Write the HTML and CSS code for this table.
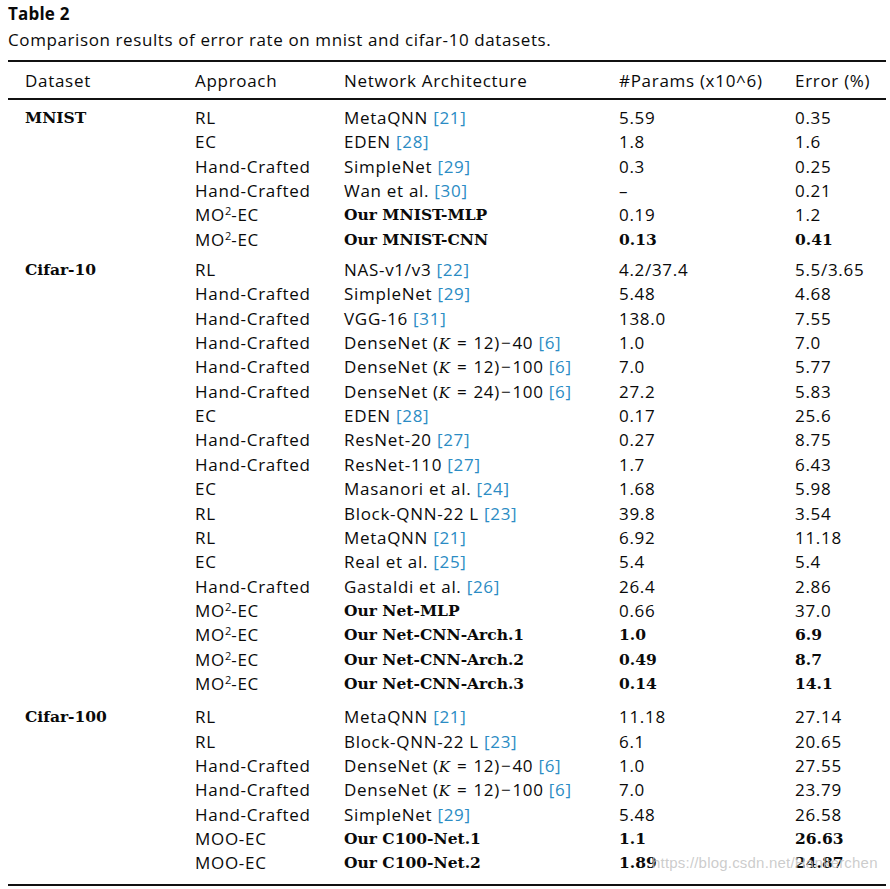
FILE: index.html
```html
<!DOCTYPE html>
<html>
<head>
<meta charset="utf-8">
<link rel="stylesheet" href="styles.css">
</head>
<body>
<div class="page">
  <div class="title">Table 2</div>
  <div class="caption">Comparison results of error rate on mnist and cifar-10 datasets.</div>
  <table class="tbl">
    <colgroup>
      <col class="c1"><col class="c2"><col class="c3"><col class="c4"><col class="c5">
    </colgroup>
    <thead>
      <tr><th class="first">Dataset</th><th>Approach</th><th>Network Architecture</th><th>#Params (x10^6)</th><th>Error (%)</th></tr>
    </thead>
    <tbody class="grp g1">
      <tr class="gtop"><td class="first b">MNIST</td><td>RL</td><td>MetaQNN <span class="ref">[21]</span></td><td>5.59</td><td>0.35</td></tr>
      <tr><td class="first"></td><td>EC</td><td>EDEN <span class="ref">[28]</span></td><td>1.8</td><td>1.6</td></tr>
      <tr><td class="first"></td><td>Hand-Crafted</td><td>SimpleNet <span class="ref">[29]</span></td><td>0.3</td><td>0.25</td></tr>
      <tr><td class="first"></td><td>Hand-Crafted</td><td>Wan et al. <span class="ref">[30]</span></td><td>–</td><td>0.21</td></tr>
      <tr><td class="first"></td><td>MO<sup>2</sup>-EC</td><td class="b">Our MNIST-MLP</td><td>0.19</td><td>1.2</td></tr>
      <tr class="gbot"><td class="first"></td><td>MO<sup>2</sup>-EC</td><td class="b">Our MNIST-CNN</td><td class="b">0.13</td><td class="b">0.41</td></tr>
    </tbody>
    <tbody class="grp g2">
      <tr class="gtop"><td class="first b">Cifar-10</td><td>RL</td><td>NAS-v1/v3 <span class="ref">[22]</span></td><td>4.2/37.4</td><td>5.5/3.65</td></tr>
      <tr><td class="first"></td><td>Hand-Crafted</td><td>SimpleNet <span class="ref">[29]</span></td><td>5.48</td><td>4.68</td></tr>
      <tr><td class="first"></td><td>Hand-Crafted</td><td>VGG-16 <span class="ref">[31]</span></td><td>138.0</td><td>7.55</td></tr>
      <tr><td class="first"></td><td>Hand-Crafted</td><td>DenseNet (<i>K</i><span class="eq">=</span>12)<span class="dash">−</span>40 <span class="ref">[6]</span></td><td>1.0</td><td>7.0</td></tr>
      <tr><td class="first"></td><td>Hand-Crafted</td><td>DenseNet (<i>K</i><span class="eq">=</span>12)<span class="dash">−</span>100 <span class="ref">[6]</span></td><td>7.0</td><td>5.77</td></tr>
      <tr><td class="first"></td><td>Hand-Crafted</td><td>DenseNet (<i>K</i><span class="eq">=</span>24)<span class="dash">−</span>100 <span class="ref">[6]</span></td><td>27.2</td><td>5.83</td></tr>
      <tr><td class="first"></td><td>EC</td><td>EDEN <span class="ref">[28]</span></td><td>0.17</td><td>25.6</td></tr>
      <tr><td class="first"></td><td>Hand-Crafted</td><td>ResNet-20 <span class="ref">[27]</span></td><td>0.27</td><td>8.75</td></tr>
      <tr><td class="first"></td><td>Hand-Crafted</td><td>ResNet-110 <span class="ref">[27]</span></td><td>1.7</td><td>6.43</td></tr>
      <tr><td class="first"></td><td>EC</td><td>Masanori et al. <span class="ref">[24]</span></td><td>1.68</td><td>5.98</td></tr>
      <tr><td class="first"></td><td>RL</td><td>Block-QNN-22 L <span class="ref">[23]</span></td><td>39.8</td><td>3.54</td></tr>
      <tr><td class="first"></td><td>RL</td><td>MetaQNN <span class="ref">[21]</span></td><td>6.92</td><td>11.18</td></tr>
      <tr><td class="first"></td><td>EC</td><td>Real et al. <span class="ref">[25]</span></td><td>5.4</td><td>5.4</td></tr>
      <tr><td class="first"></td><td>Hand-Crafted</td><td>Gastaldi et al. <span class="ref">[26]</span></td><td>26.4</td><td>2.86</td></tr>
      <tr><td class="first"></td><td>MO<sup>2</sup>-EC</td><td class="b">Our Net-MLP</td><td>0.66</td><td>37.0</td></tr>
      <tr><td class="first"></td><td>MO<sup>2</sup>-EC</td><td class="b">Our Net-CNN-Arch.1</td><td class="b">1.0</td><td class="b">6.9</td></tr>
      <tr><td class="first"></td><td>MO<sup>2</sup>-EC</td><td class="b">Our Net-CNN-Arch.2</td><td class="b">0.49</td><td class="b">8.7</td></tr>
      <tr class="gbot"><td class="first"></td><td>MO<sup>2</sup>-EC</td><td class="b">Our Net-CNN-Arch.3</td><td class="b">0.14</td><td class="b">14.1</td></tr>
    </tbody>
    <tbody class="grp g3 last">
      <tr class="gtop"><td class="first b">Cifar-100</td><td>RL</td><td>MetaQNN <span class="ref">[21]</span></td><td>11.18</td><td>27.14</td></tr>
      <tr><td class="first"></td><td>RL</td><td>Block-QNN-22 L <span class="ref">[23]</span></td><td>6.1</td><td>20.65</td></tr>
      <tr><td class="first"></td><td>Hand-Crafted</td><td>DenseNet (<i>K</i><span class="eq">=</span>12)<span class="dash">−</span>40 <span class="ref">[6]</span></td><td>1.0</td><td>27.55</td></tr>
      <tr><td class="first"></td><td>Hand-Crafted</td><td>DenseNet (<i>K</i><span class="eq">=</span>12)<span class="dash">−</span>100 <span class="ref">[6]</span></td><td>7.0</td><td>23.79</td></tr>
      <tr><td class="first"></td><td>Hand-Crafted</td><td>SimpleNet <span class="ref">[29]</span></td><td>5.48</td><td>26.58</td></tr>
      <tr><td class="first"></td><td>MOO-EC</td><td class="b">Our C100-Net.1</td><td class="b">1.1</td><td class="b">26.63</td></tr>
      <tr class="gbot"><td class="first"></td><td>MOO-EC</td><td class="b">Our C100-Net.2</td><td class="b">1.89</td><td class="b">24.87</td></tr>
    </tbody>
  </table>
  <div class="watermark">https://blog.csdn.net/Hankerchen</div>
</div>
</body>
</html>
```

FILE: styles.css
```css
html, body {
  margin: 0;
  padding: 0;
  background: #fff;
}
.page {
  position: relative;
  padding: 4px 4px 0 8px;
  width: 878px;
  color: #0a0a0a;
  font-family: "Open Sans", "Noto Sans", sans-serif;
  font-size: 17px;
  letter-spacing: 0.7px;
}
.title {
  font-weight: bold;
  font-size: 17px;
  line-height: 20px;
  letter-spacing: 0.2px;
}
.caption {
  font-size: 17px;
  line-height: 24px;
  margin-top: 4px;
  letter-spacing: 0.6px;
}
.tbl {
  width: 878px;
  border-collapse: collapse;
  margin-top: 8px;
  table-layout: fixed;
}
.c1 { width: 187px; }
.c2 { width: 149px; }
.c3 { width: 275px; }
.c4 { width: 176px; }
.c5 { width: 91px; }
.tbl th {
  font-weight: normal;
  text-align: left;
  padding: 0;
  height: 36px;
  border-top: 2px solid #111;
  border-bottom: 2px solid #111;
  vertical-align: middle;
  white-space: nowrap;
}
.tbl td {
  padding: 0;
  height: 24.35px;
  line-height: 24.35px;
  white-space: nowrap;
  vertical-align: middle;
}
.tbl .first {
  padding-left: 17px;
}
.tbl .g1 .gtop td { padding-top: 6px; }
.tbl .g2 .gtop td { padding-top: 5px; }
.tbl .g3 .gtop td { padding-top: 8px; }
.tbl .gbot td {
  padding-bottom: 1px;
}
.tbl tbody.last .gbot td {
  padding-bottom: 8px;
  border-bottom: 2px solid #111;
}
.b {
  font-family: "DejaVu Serif", "Liberation Serif", serif;
  font-weight: bold;
  font-size: 15.5px;
  letter-spacing: 0;
}
.ref {
  color: #2b8cc4;
}
sup {
  font-size: 11px;
  line-height: 0;
  vertical-align: 6px;
  letter-spacing: 0;
}
i {
  font-family: "DejaVu Serif", serif;
  font-size: 15px;
  line-height: 1;
  letter-spacing: 0;
  margin-right: 1px;
}
.eq {
  margin: 0 6px;
}
.dash {
  margin: 0 1px;
}
.watermark {
  position: absolute;
  left: 652px;
  top: 854px;
  font-family: "Liberation Sans", sans-serif;
  font-size: 15px;
  color: rgba(195, 195, 195, 0.85);
  letter-spacing: 0.2px;
}
```
